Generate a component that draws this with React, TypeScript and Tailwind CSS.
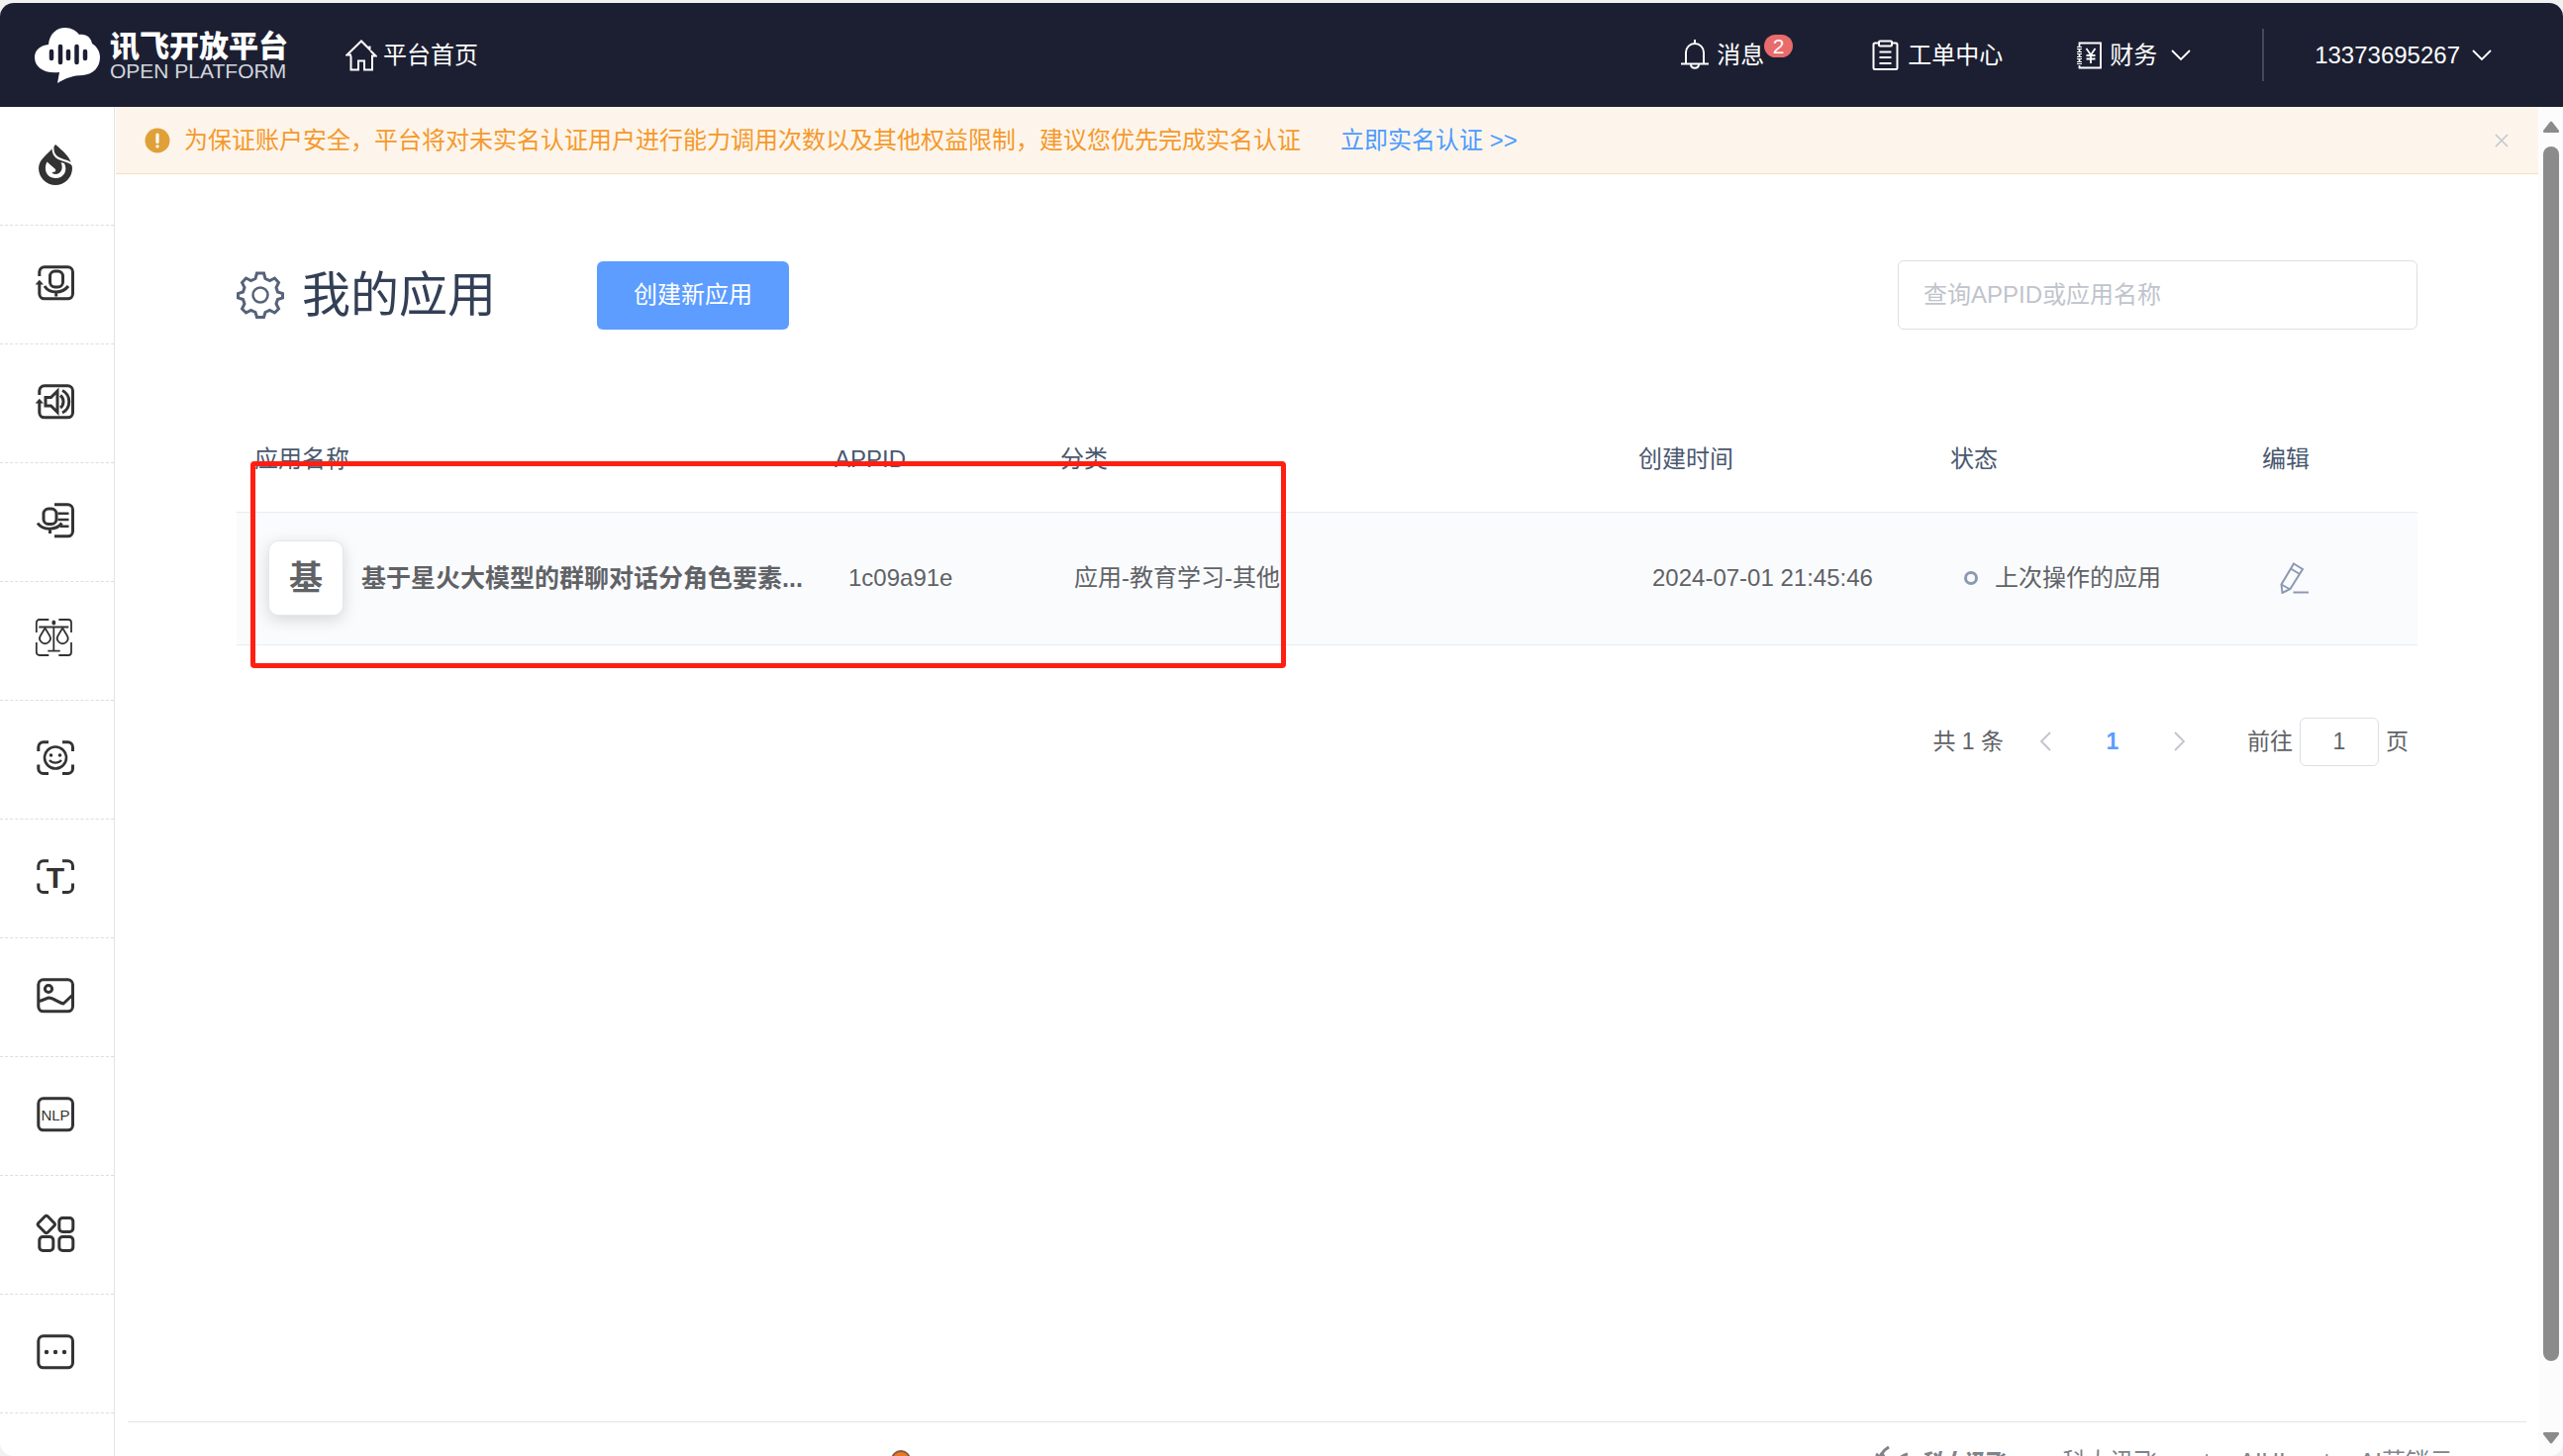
import { useState, type ReactNode } from "react";
import clsx from "clsx";

const FRAME = "M3.8 11V6.8a5 5 0 0 1 5-5h23.7a5 5 0 0 1 5 5v22a5 5 0 0 1-5 5H8.8a5 5 0 0 1-5-5V18";
const CORNERS =
  "M2.8 11V6.8a5 5 0 0 1 5-5H13M27 1.8h5.5a5 5 0 0 1 5 5V11M37.5 24.5v4a5 5 0 0 1-5 5H27M13 33.5H7.8a5 5 0 0 1-5-5v-4";

const SIDE_ITEMS: { label: string; icon: ReactNode }[] = [
  {
    label: "热门",
    icon: (
      <>
        <path d="M20-2C27 4 37 12 37 22a17 17 0 0 1-34 0C3 12 14 7 20-2z" fill="#333" stroke="none" />
        <path d="M17.500-1c-1 10 4 13 11 15 4 1 7 2 9.500 5" stroke="#fff" strokeWidth={2} />
        <path
          d="M11.500 15.500C7.500 23 11 32 20 32c9 0 12.500-8 9-15l-3.500-1c3 6 0 12-5.500 12-2 0-3-1-3.500-2 2.500.5 4.500-1 3.500-3z"
          fill="#fff"
          stroke="none"
        />
      </>
    ),
  },
  {
    label: "语音识别",
    icon: (
      <>
        <path d={FRAME} />
        <path d="M3.8 14.8L8 19.5H-.4z" fill="#333" stroke="none" />
        <rect x="14.5" y="6" width="13" height="16" rx="5" />
        <path d="M9 21c5 8 18 8 24 0M20.7 27v4.500" />
      </>
    ),
  },
  {
    label: "语音合成",
    icon: (
      <>
        <path d={FRAME} />
        <path d="M3.8 14.8L8 19.5H-.4z" fill="#333" stroke="none" />
        <path d="M10 13.500h5.500l6.500-6.500v21.500l-6.500-6.500H10z" />
        <path d="M25 11.500c4 3 4 9.500 0 12.500M27 6.500c9 4.500 9 18 0 22.500" />
      </>
    ),
  },
  {
    label: "语音扩展",
    icon: (
      <>
        <path d="M19 1.800h13.500a5 5 0 0 1 5 5v22a5 5 0 0 1-5 5H19" />
        <rect x="8" y="6" width="13" height="15.500" rx="5" />
        <path d="M2 20.500c5 7.500 19 7.500 24.500 0M14.500 26v5" />
        <path d="M22.500 10.700h11M22.500 17h11M25 23.700h8.500" strokeWidth={2.4} />
      </>
    ),
  },
  {
    label: "司法",
    icon: (
      <g strokeWidth={1.8}>
        <path d="M.8 11V1a3 3 0 0 1 3-3h9.500M23.300-2h9.700a3 3 0 0 1 3 3v10M.8 21v10a3 3 0 0 0 3 3h9.500M23.300 34h9.700a3 3 0 0 0 3-3V21" />
        <path d="M3.300 5.500h30M18.300 5v24.500M12.300 29.700h12.400" />
        <path d="M9.500 6.500l-4.500 7.500a5.300 5.300 0 1 0 9 0zM27.200 6.500l-4.500 7.500a5.300 5.300 0 1 0 9 0z" />
        <ellipse cx="18.300" cy="1" rx="2" ry="2.600" fill="#333" stroke="none" />
      </g>
    ),
  },
  {
    label: "人脸识别",
    icon: (
      <>
        <path d={CORNERS} />
        <circle cx="20" cy="17.500" r="11" strokeWidth={2.600} />
        <circle cx="15.500" cy="15" r="1.800" fill="#333" stroke="none" />
        <circle cx="24.500" cy="15" r="1.800" fill="#333" stroke="none" />
        <path d="M14 20c3 3.500 9 3.500 12 0" strokeWidth={2.400} />
      </>
    ),
  },
  {
    label: "文字识别",
    icon: (
      <>
        <path d={CORNERS} />
        <text x="20" y="29" textAnchor="middle" fill="#333" stroke="none" className="text-[30px] font-bold">
          T
        </text>
      </>
    ),
  },
  {
    label: "图像识别",
    icon: (
      <>
        <rect x="2.800" y="1.800" width="34.700" height="32" rx="5" />
        <circle cx="13" cy="11" r="3.600" />
        <path d="M4 23.500l9-3.500c5 0 10 5 15 6l9-8.500" />
      </>
    ),
  },
  {
    label: "自然语言处理",
    icon: (
      <>
        <rect x="2.800" y="1.800" width="34.700" height="32" rx="5" />
        <text x="20" y="24" textAnchor="middle" fill="#333" stroke="none" className="text-[15px]">
          NLP
        </text>
      </>
    ),
  },
  {
    label: "基础服务",
    icon: (
      <>
        <path d="M9.500.8a2 2 0 0 1 2.600 0l6.800 6.900a2 2 0 0 1 0 2.600l-6.800 6.900a2 2 0 0 1-2.600 0L2.700 10.300a2 2 0 0 1 0-2.600z" />
        <rect x="23.800" y="2.500" width="14" height="14" rx="3.500" />
        <rect x="3.800" y="21.500" width="14" height="14" rx="3.500" />
        <rect x="23.800" y="21.500" width="14" height="14" rx="3.500" />
      </>
    ),
  },
  {
    label: "更多",
    icon: (
      <>
        <rect x="2.800" y="1.800" width="34.700" height="32" rx="5" />
        <path d="M11 18h0M20 18h0M29 18h0" strokeWidth={4.400} strokeLinecap="round" />
      </>
    ),
  },
];

const APPS = [
  {
    name: "基于星火大模型的群聊对话分角色要素...",
    appid: "1c09a91e",
    category: "应用-教育学习-其他",
    created: "2024-07-01 21:45:46",
    status: "上次操作的应用",
  },
];

const COLUMNS = [
  { title: "应用名称", width: "w-[586px]" },
  { title: "APPID", width: "w-[228px]" },
  { title: "分类", width: "w-[584px]" },
  { title: "创建时间", width: "w-[315px]" },
  { title: "状态", width: "w-[315px]" },
  { title: "编辑", width: "w-[175px]" },
];

function Chevron({ className }: { className?: string }) {
  return (
    <svg viewBox="0 0 20 12" className={clsx("h-3 w-5 fill-none stroke-current", className)} strokeWidth={1.8}>
      <path d="M1 1l9 9 9-9" />
    </svg>
  );
}

function Logo() {
  return (
    <a href="#" className="flex items-center gap-[10px]">
      <svg viewBox="0 0 66 56" className="h-14 w-[66px]">
        <path
          d="M14 17C15 6 22 0 31 0c6 0 11 3 14 7 7-1 12 3 13 9 5 3 8 8 8 14 0 10-7 17-17 18-10 0-18 3-26 8l2-11C10 47 0 40 0 30c0-8 6-12 14-13z"
          fill="#fff"
        />
        <path d="M17 24v7M26 19v16M34 24v7M42.500 19v16M51 24v7" stroke="#1c1f32" strokeWidth={4.500} strokeLinecap="round" />
      </svg>
      <span className="flex flex-col pt-1">
        <span className="text-[30px] leading-7 font-black">讯飞开放平台</span>
        <span className="text-[21px] leading-[22px] text-gray-300">OPEN PLATFORM</span>
      </span>
    </a>
  );
}

function Header() {
  return (
    <header className="flex h-[105px] shrink-0 items-center bg-[#1c1f32] pr-[72px] pl-[35px] text-white">
      <Logo />
      <a href="#" className="ml-[58px] flex items-center gap-[6px]">
        <svg viewBox="0 0 32 32" className="size-8 fill-none stroke-current" strokeWidth={2}>
          <path d="M6 15.500H1.500L16 1.500l8.500 8.500V6.500M25.500 11.500l5 5H27v14h-8v-9h-6v9H5.500v-14" />
        </svg>
        平台首页
      </a>
      <nav className="ml-auto flex items-center">
        <a href="#" className="relative flex items-center gap-2">
          <svg viewBox="0 0 28 32" className="h-8 w-7 fill-none stroke-current" strokeWidth={2}>
            <path d="M14 0v3M5 24V13a9 9 0 0 1 18 0v11M0 24.500h28M10 25c0 5 8 5 8 0" />
          </svg>
          消息
          <span className="absolute -top-[3px] left-[84px] flex h-[23px] w-[29px] items-center justify-center rounded-full bg-[#e96b6b] text-[21px] leading-none">
            2
          </span>
        </a>
        <a href="#" className="ml-[109px] flex items-center gap-[9px]">
          <svg viewBox="0 0 27 32" className="h-8 w-[27px] fill-none stroke-current" strokeWidth={2}>
            <path d="M7 3.500H3a1.500 1.500 0 0 0-1.500 1.500v23.500A1.500 1.500 0 0 0 3 30h21a1.500 1.500 0 0 0 1.500-1.500V5A1.500 1.500 0 0 0 24 3.500h-4" />
            <rect x="7" y="1.500" width="13" height="5" rx="1" />
            <path d="M7.500 12.500h12M7.500 18h12M7.500 24h12" />
          </svg>
          工单中心
        </a>
        <a href="#" className="ml-[74px] flex items-center gap-2">
          <svg viewBox="0 0 26 28" className="h-7 w-[26px] fill-none stroke-current" strokeWidth={1.8}>
            <path d="M3.500 5V1.500H25v25H3.500V24M3.500 8v2M3.500 13v2M3.500 18v2" />
            <path d="M1 6.500h5M1 11.500h5M1 16.500h5M1 21.500h5" strokeWidth={3} />
            <path d="M1 6.500h5M1 11.500h5M1 16.500h5M1 21.500h5" stroke="#1c1f32" strokeWidth={1} />
            <path d="M10.500 7l4.500 6.500L19.500 7M15 13.500V22M10.500 14h9M10.500 17.500h9" />
          </svg>
          财务
          <Chevron className="ml-[6px]" />
        </a>
        <span className="ml-[72px] h-[53px] w-[2px] bg-[#454859]" />
        <button type="button" className="ml-[51px] flex items-center gap-3">
          13373695267
          <Chevron />
        </button>
      </nav>
    </header>
  );
}

function Sidebar() {
  return (
    <aside className="w-[116px] shrink-0 border-r border-[#e3e3e3]">
      {SIDE_ITEMS.map((item) => (
        <a
          key={item.label}
          href="#"
          aria-label={item.label}
          className="flex h-[120px] items-center border-b border-dashed border-[#dedede] pl-9"
        >
          <svg viewBox="0 0 39 39" className="size-[39px] overflow-visible fill-none stroke-[#333]" strokeWidth={3}>
            {item.icon}
          </svg>
        </a>
      ))}
    </aside>
  );
}

function Notice({ onClose }: { onClose: () => void }) {
  return (
    <div className="flex h-[68px] shrink-0 items-center border-b border-[#f3dfba] bg-[#fdf5eb] pr-[30px] pl-[29px] text-[#f5992c]">
      <svg viewBox="0 0 26 26" className="size-[26px]">
        <circle cx="13" cy="13" r="12.500" fill="#dfa137" />
        <path d="M13 7v7.500M13 18.800v.2" stroke="#fff" strokeWidth={3.200} strokeLinecap="round" />
      </svg>
      <span className="ml-[14px]">为保证账户安全，平台将对未实名认证用户进行能力调用次数以及其他权益限制，建议您优先完成实名认证</span>
      <a href="#" className="ml-10 text-[#4c9bff]">
        立即实名认证 &gt;&gt;
      </a>
      <button type="button" aria-label="关闭" onClick={onClose} className="ml-auto text-[#c3c7cf]">
        <svg viewBox="0 0 14 14" className="size-[14px] stroke-current" strokeWidth={1.600}>
          <path d="M1 1l12 12M13 1L1 13" />
        </svg>
      </button>
    </div>
  );
}

function AppTable() {
  return (
    <div className="relative mt-[78px]">
      <table className="w-full table-fixed border-collapse text-left">
        <thead>
          <tr className="h-[106px] border-b border-[#e8ebf0] text-[#4a5870]">
            {COLUMNS.map((c) => (
              <th key={c.title} scope="col" className={clsx("pl-[18px] font-normal", c.width)}>
                {c.title}
              </th>
            ))}
          </tr>
        </thead>
        <tbody>
          {APPS.map((app) => (
            <tr key={app.appid} className="h-[134px] border-b border-[#e8ebf0] bg-[#fafbfd] text-[#606266]">
              <td className="pl-8">
                <div className="flex items-center gap-[18px]">
                  <span className="flex size-[76px] shrink-0 items-center justify-center rounded-[10px] border border-[#e4e7ec] bg-white text-[34px] font-bold shadow-[0_4px_16px_rgba(0,0,0,0.15)]">
                    {app.name[0]}
                  </span>
                  <span className="text-[25px] font-bold whitespace-nowrap">{app.name}</span>
                </div>
              </td>
              <td className="pl-8">{app.appid}</td>
              <td className="pl-8">{app.category}</td>
              <td className="pl-8">{app.created}</td>
              <td className="pl-8">
                <div className="flex items-center gap-[17px]">
                  <span className="size-[14px] rounded-full border-3 border-[#8c99b3]" />
                  {app.status}
                </div>
              </td>
              <td className="pl-9">
                <button type="button" aria-label="编辑" className="block">
                  <svg viewBox="0 0 30 32" className="h-8 w-[30px] fill-none stroke-[#8c99b3]" strokeWidth={2}>
                    <path d="M14 1.500l9 5.500L10.500 27 2.500 31 1.500 22.500zM11 6.500l9 5.500M1.500 22.500l9 5M13.500 30.500H29" />
                  </svg>
                </button>
              </td>
            </tr>
          ))}
        </tbody>
      </table>
      <div className="pointer-events-none absolute top-[55px] left-[14px] h-[209px] w-[1046px] rounded-[4px] border-5 border-[#ff1f12]" />
    </div>
  );
}

function Pagination() {
  const [page, setPage] = useState("1");

  return (
    <div className="mt-[73px] flex h-[49px] items-center justify-end pr-[9px] text-[23px] text-[#606266]">
      <span>共 1 条</span>
      <button type="button" aria-label="上一页" className="ml-2 flex w-[68px] justify-center text-[#c0c4cc]">
        <Chevron className="rotate-90" />
      </button>
      <button type="button" className="w-[68px] font-bold text-[#5c9dff]">
        1
      </button>
      <button type="button" aria-label="下一页" className="flex w-[68px] justify-center text-[#c0c4cc]">
        <Chevron className="-rotate-90" />
      </button>
      <label className="ml-[34px] flex items-center gap-[7px]">
        前往
        <input
          value={page}
          onChange={(e) => setPage(e.target.value)}
          className="h-[49px] w-[80px] rounded-[6px] border border-[#dcdfe6] text-center"
        />
        页
      </label>
    </div>
  );
}

function Footer() {
  return (
    <footer className="mx-3 mt-auto flex h-[35px] shrink-0 items-start border-t border-[#e0e4eb] pt-[28px] leading-6 whitespace-nowrap text-[#808389]">
      <svg viewBox="0 0 20 20" className="ml-[771px] size-5 shrink-0">
        <circle cx="10" cy="10" r="9" fill="#e8792a" stroke="#8a5a3c" strokeWidth={2} />
      </svg>
      <span className="ml-auto flex items-start gap-[10px] text-[21px] font-black italic">
        <svg viewBox="0 0 36 24" className="-mt-1 h-6 w-9 fill-none stroke-current" strokeWidth={3}>
          <path d="M15 1C8 5 5 10 4 20M2 8c3 2 6 8 8 14M8 7l7 14M34 8c-8 2-10 6-11 12" />
        </svg>
        科大讯飞
      </span>
      <a href="#" className="ml-[60px]">科大讯飞</a>
      <a href="#" className="ml-2">center</a>
      <a href="#" className="ml-2">AIUIcenter</a>
      <a href="#" className="mr-[74px] ml-2">AI营销云</a>
    </footer>
  );
}

export default function App() {
  const [noticeOpen, setNoticeOpen] = useState(true);
  const [keyword, setKeyword] = useState("");

  return (
    <div className="h-screen overflow-hidden bg-[#f1f1f1] pt-[3px] font-['Liberation_Sans','Noto_Sans_CJK_SC',sans-serif] text-[24px] leading-9">
      <div className="flex h-full flex-col overflow-hidden rounded-[14px] bg-white">
        <Header />
        <div className="flex min-h-0 flex-1">
          <Sidebar />
          <main className="ml-px flex min-w-0 flex-1 flex-col overflow-hidden">
            {noticeOpen && <Notice onClose={() => setNoticeOpen(false)} />}
            <section className="px-[122px] pt-[87px]">
              <div className="flex items-center">
                <svg viewBox="0 0 48 48" className="size-12 fill-none stroke-[#56627a]" strokeWidth={3}>
                  <path d="M20.500 2h7l1.500 5.500 4.500 2L38.500 7l4 4.500-2.500 5 1.500 4.500 5 1.500v4.500l-5 1.500-1.500 4.500 2.500 5-4 4-5-2.500-4.500 2-1.500 5h-7L19 41.500l-4.500-2-5 2.500-4-4L8 33l-1.500-4.500-5-1.500v-4.500l5-1.500L8 16.500l-2.500-5L9.500 7l5 2.500 4.500-2z" />
                  <circle cx="24" cy="24" r="7.500" strokeWidth={2.500} />
                </svg>
                <h1 className="ml-[18px] text-[49px] leading-[70px] text-[#333f55]">我的应用</h1>
                <button type="button" className="ml-[102px] h-[69px] w-[194px] rounded-[6px] bg-[#5c9dff] text-white">
                  创建新应用
                </button>
                <input
                  aria-label="查询应用"
                  value={keyword}
                  onChange={(e) => setKeyword(e.target.value)}
                  placeholder="查询APPID或应用名称"
                  className="ml-auto h-[70px] w-[525px] rounded-[6px] border border-[#dcdfe6] px-[25px] placeholder:text-[#c0c4cc]"
                />
              </div>
              <AppTable />
              <Pagination />
            </section>
            <Footer />
          </main>
          <div className="flex w-[25px] shrink-0 flex-col items-center bg-[#fcfcfc] pt-[14px] pb-3" aria-hidden="true">
            <svg viewBox="0 0 18 12" className="h-3 w-[18px] fill-[#8b8b8b]">
              <path d="M8 1a1.500 1.500 0 0 1 2 0l7 9a1.500 1.500 0 0 1-1 2H2a1.500 1.500 0 0 1-1-2z" />
            </svg>
            <span className="mt-[14px] mb-[72px] w-4 flex-1 rounded-full bg-[#8b8b8b]" />
            <svg viewBox="0 0 18 12" className="h-3 w-[18px] rotate-180 fill-[#8b8b8b]">
              <path d="M8 1a1.500 1.500 0 0 1 2 0l7 9a1.500 1.500 0 0 1-1 2H2a1.500 1.500 0 0 1-1-2z" />
            </svg>
          </div>
        </div>
      </div>
    </div>
  );
}
